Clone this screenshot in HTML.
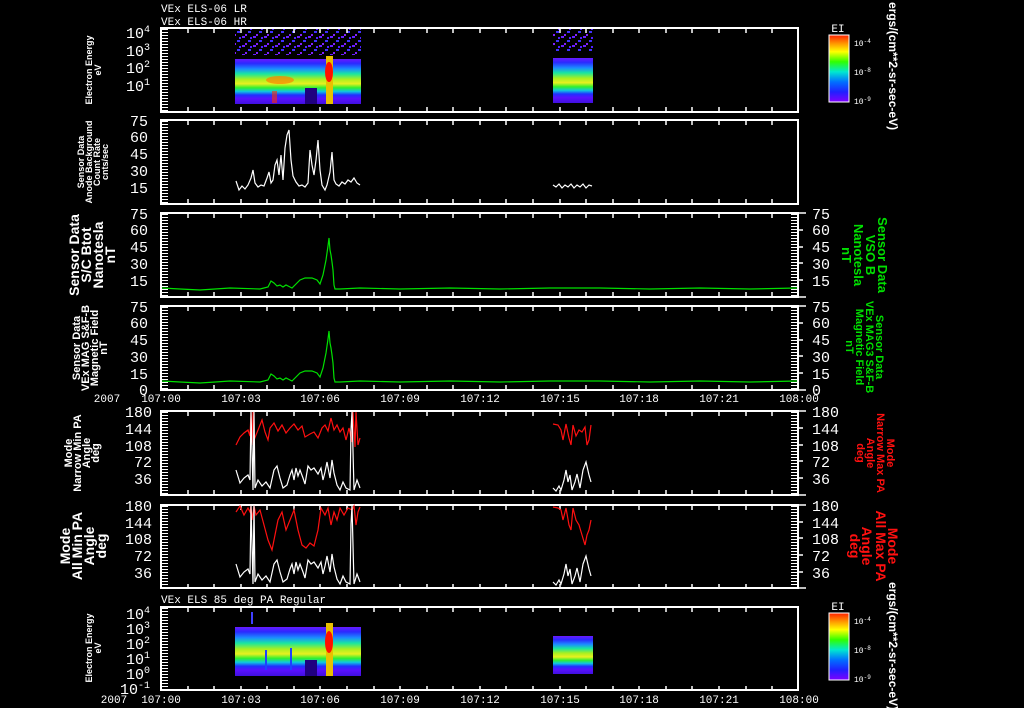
<!DOCTYPE html>
<html><head><meta charset="utf-8"><style>
html,body{margin:0;padding:0;background:#000;width:1024px;height:708px;overflow:hidden}
svg{display:block}
text{font-family:"Liberation Mono","DejaVu Sans Mono",monospace;fill:#fff}
.t{font-size:11px}
.yl{font-size:15px;font-family:"Liberation Sans",sans-serif}
text.lab,.lab text{font-family:"Liberation Sans",sans-serif;font-weight:bold}
</style></head><body>
<svg width="1024" height="708" viewBox="0 0 1024 708" xmlns="http://www.w3.org/2000/svg">
<defs>
<linearGradient id="sp1" x1="0" y1="0" x2="0" y2="1">
<stop offset="0" stop-color="#6a1aff"/><stop offset="0.1" stop-color="#2a2aff"/><stop offset="0.22" stop-color="#1c8cff"/><stop offset="0.33" stop-color="#19e6a0"/><stop offset="0.45" stop-color="#a8f020"/><stop offset="0.55" stop-color="#e8f020"/><stop offset="0.64" stop-color="#30f030"/><stop offset="0.72" stop-color="#10c8e0"/><stop offset="0.8" stop-color="#2030ff"/><stop offset="0.88" stop-color="#5a10ff"/><stop offset="1" stop-color="#4010e0"/>
</linearGradient>
<linearGradient id="cb" x1="0" y1="0" x2="0" y2="1">
<stop offset="0" stop-color="#ff2000"/><stop offset="0.12" stop-color="#ff9000"/><stop offset="0.25" stop-color="#ffff00"/><stop offset="0.4" stop-color="#30ff00"/><stop offset="0.55" stop-color="#00e8d0"/><stop offset="0.7" stop-color="#0070ff"/><stop offset="0.85" stop-color="#2020ff"/><stop offset="1" stop-color="#8000ff"/>
</linearGradient>
<pattern id="spk" width="11" height="9" patternUnits="userSpaceOnUse">
<rect x="0" y="0" width="3" height="2" fill="#6a20ff"/><rect x="6" y="4" width="3" height="2" fill="#4030ff"/><rect x="3" y="7" width="2" height="2" fill="#8020ff"/><rect x="8" y="1" width="2" height="2" fill="#5020ff"/>
</pattern>
</defs>

<text class="t" x="161" y="12">VEx ELS-06 LR</text>
<text class="t" x="161" y="25">VEx ELS-06 HR</text>
<text class="t" x="161" y="603">VEx ELS 85 deg PA Regular</text>

<!-- Panel 1 spectrogram -->
<rect x="235" y="29" width="126" height="26" fill="url(#spk)"/>
<rect x="235" y="59" width="126" height="45" fill="url(#sp1)"/>
<ellipse cx="280" cy="80" rx="14" ry="4" fill="#ff8000" opacity="0.7"/>
<rect x="272" y="91" width="5" height="12" fill="#ff3000" opacity="0.6"/>
<rect x="305" y="88" width="12" height="16" fill="#200080"/>
<rect x="326" y="56" width="7" height="48" fill="#e8c000"/>
<ellipse cx="329" cy="72" rx="4" ry="10" fill="#ff1000"/>
<rect x="553" y="29" width="40" height="22" fill="url(#spk)"/>
<rect x="553" y="58" width="40" height="45" fill="url(#sp1)"/>

<!-- Panel 7 spectrogram -->
<rect x="235" y="627" width="126" height="49" fill="url(#sp1)"/>
<rect x="305" y="660" width="12" height="16" fill="#200080"/>
<rect x="326" y="623" width="7" height="53" fill="#e8c000"/>
<ellipse cx="329" cy="642" rx="4" ry="11" fill="#ff1000"/>
<rect x="553" y="636" width="40" height="38" fill="url(#sp1)"/>
<rect x="251" y="612" width="2" height="12" fill="#4040ff"/>
<rect x="265" y="650" width="2" height="20" fill="#2040ff"/>
<rect x="290" y="648" width="2" height="22" fill="#2040ff"/>

<g fill="none" stroke="#fff" stroke-width="2">
<rect x="161" y="28" width="637" height="84"/>
<rect x="161" y="120" width="637" height="84"/>
<rect x="161" y="213" width="637" height="84"/>
<rect x="161" y="306" width="637" height="84"/>
<rect x="161" y="411" width="637" height="84"/>
<rect x="161" y="505" width="637" height="83"/>
<rect x="161" y="607" width="637" height="83"/>
</g>

<g stroke="#fff" stroke-width="6" stroke-dasharray="1 2">
<line x1="165" y1="29" x2="165" y2="111"/>
<line x1="165" y1="121" x2="165" y2="203"/>
<line x1="165" y1="214" x2="165" y2="296"/>
<line x1="165" y1="307" x2="165" y2="389"/>
<line x1="165" y1="412" x2="165" y2="494"/>
<line x1="165" y1="506" x2="165" y2="587"/>
<line x1="165" y1="608" x2="165" y2="689"/>
<line x1="794" y1="214" x2="794" y2="296"/>
<line x1="794" y1="307" x2="794" y2="389"/>
<line x1="794" y1="412" x2="794" y2="494"/>
<line x1="794" y1="506" x2="794" y2="587"/>
</g>
<g stroke="#fff" stroke-width="1.5">
<path d="M798 213h8M798 230h5M798 247h5M798 263h5M798 280h5M798 297h8"/>
<path d="M798 306h8M798 323h5M798 340h5M798 356h5M798 373h5M798 390h8"/>
<path d="M798 411h8M798 428h5M798 445h5M798 461h5M798 478h5M798 495h8"/>
<path d="M798 505h8M798 522h5M798 538h5M798 555h5M798 572h5M798 588h8"/>
</g>

<g stroke="#fff" stroke-width="1.5" id="xt">
<path d="M188 28v5M214 28v5M241 28v5M267 28v5M294 28v5M320 28v5M347 28v5M374 28v5M400 28v5M427 28v5M453 28v5M480 28v5M506 28v5M533 28v5M560 28v5M586 28v5M613 28v5M639 28v5M666 28v5M692 28v5M719 28v5M746 28v5M772 28v5"/>
<path d="M188 112v-5M214 112v-5M241 112v-5M267 112v-5M294 112v-5M320 112v-5M347 112v-5M374 112v-5M400 112v-5M427 112v-5M453 112v-5M480 112v-5M506 112v-5M533 112v-5M560 112v-5M586 112v-5M613 112v-5M639 112v-5M666 112v-5M692 112v-5M719 112v-5M746 112v-5M772 112v-5"/>
</g>
<use href="#xt" y="92"/>
<use href="#xt" y="185"/>
<use href="#xt" y="278"/>
<use href="#xt" y="383"/>
<use href="#xt" y="477"/>
<use href="#xt" y="579"/>

<g class="yl" text-anchor="end">
<text x="150" y="38">10<tspan dy="-6" font-size="10">4</tspan></text>
<text x="150" y="56">10<tspan dy="-6" font-size="10">3</tspan></text>
<text x="150" y="73">10<tspan dy="-6" font-size="10">2</tspan></text>
<text x="150" y="91">10<tspan dy="-6" font-size="10">1</tspan></text>
<text x="148" y="126">75</text><text x="148" y="142">60</text><text x="148" y="159">45</text><text x="148" y="176">30</text><text x="148" y="193">15</text>
<text x="148" y="219">75</text><text x="148" y="235">60</text><text x="148" y="252">45</text><text x="148" y="269">30</text><text x="148" y="286">15</text>
<text x="148" y="312">75</text><text x="148" y="328">60</text><text x="148" y="345">45</text><text x="148" y="362">30</text><text x="148" y="379">15</text><text x="148" y="395">0</text>
<text x="152" y="417">180</text><text x="152" y="434">144</text><text x="152" y="451">108</text><text x="152" y="467">72</text><text x="152" y="484">36</text>
<text x="152" y="511">180</text><text x="152" y="528">144</text><text x="152" y="544">108</text><text x="152" y="561">72</text><text x="152" y="578">36</text>
<text x="150" y="619">10<tspan dy="-6" font-size="10">4</tspan></text>
<text x="150" y="634">10<tspan dy="-6" font-size="10">3</tspan></text>
<text x="150" y="649">10<tspan dy="-6" font-size="10">2</tspan></text>
<text x="150" y="664">10<tspan dy="-6" font-size="10">1</tspan></text>
<text x="150" y="679">10<tspan dy="-6" font-size="10">0</tspan></text>
<text x="150" y="694">10<tspan dy="-6" font-size="10">-1</tspan></text>
</g>
<g class="yl">
<text x="812" y="219">75</text><text x="812" y="235">60</text><text x="812" y="252">45</text><text x="812" y="269">30</text><text x="812" y="286">15</text>
<text x="812" y="312">75</text><text x="812" y="328">60</text><text x="812" y="345">45</text><text x="812" y="362">30</text><text x="812" y="379">15</text><text x="812" y="395">0</text>
<text x="812" y="417">180</text><text x="812" y="434">144</text><text x="812" y="451">108</text><text x="812" y="467">72</text><text x="812" y="484">36</text>
<text x="812" y="511">180</text><text x="812" y="528">144</text><text x="812" y="544">108</text><text x="812" y="561">72</text><text x="812" y="578">36</text>
</g>

<g class="t" text-anchor="middle">
<text x="107" y="402">2007</text><text x="161" y="402">107:00</text><text x="241" y="402">107:03</text><text x="320" y="402">107:06</text><text x="400" y="402">107:09</text><text x="480" y="402">107:12</text><text x="560" y="402">107:15</text><text x="639" y="402">107:18</text><text x="719" y="402">107:21</text><text x="799" y="402">108:00</text>
<text x="114" y="703">2007</text><text x="161" y="703">107:00</text><text x="241" y="703">107:03</text><text x="320" y="703">107:06</text><text x="400" y="703">107:09</text><text x="480" y="703">107:12</text><text x="560" y="703">107:15</text><text x="639" y="703">107:18</text><text x="719" y="703">107:21</text><text x="799" y="703">108:00</text>
</g>

<g fill="none" stroke-width="1.2">
<polyline stroke="#fff" points="236,181 239,190 242,186 245,189 248,185 251,178 253,170 255,183 258,187 261,185 264,186 267,178 269,172 271,183 273,180 275,165 277,160 279,175 281,155 283,180 285,148 287,135 289,130 291,160 293,176 296,182 299,186 302,185 305,187 308,183 310,150 312,165 314,175 316,160 318,140 320,170 322,185 325,190 327,185 330,172 332,152 334,180 336,184 339,186 342,182 345,184 348,180 351,182 354,178 357,183 360,185"/>
<polyline stroke="#fff" points="553,185 556,187 559,184 562,188 565,185 568,187 571,184 574,188 577,185 580,187 583,184 586,188 589,185 592,186"/>
<polyline id="g1" stroke="#00e000" points="162,288 180,289 200,290 230,288 260,289 268,287 271,281 274,283 277,286 280,285 283,287 286,285 290,287 292,288 296,284 300,280 305,278 312,278 317,280 320,284 323,275 326,260 328,246 329,238 330,250 331,255 332,262 333,270 334,285 335,289 340,289 360,288 400,289 450,288 500,289 550,288 600,288 650,289 700,288 750,289 797,288"/>
<use href="#g1" y="93"/>
<polyline stroke="#ff1010" points="236,445 240,437 244,433 248,430 250,436 251,412 252,445 253,412 254,440 258,430 262,420 265,432 268,440 270,428 274,423 278,431 282,425 286,433 290,428 294,424 298,430 302,426 305,437 310,434 314,432 318,438 322,428 325,425 328,431 331,418 334,430 337,425 340,432 343,428 346,440 349,428 352,442 353,412 355,447 356,412 358,445 360,438"/>
<polyline stroke="#ff1010" points="553,424 558,425 561,430 563,440 566,424 569,438 571,445 573,425 576,436 579,430 582,432 585,427 587,445 589,440 591,425"/>
<polyline id="w1" stroke="#fff" points="236,470 240,483 244,478 248,475 250,480 251,412 253,490 254,412 255,488 258,480 262,486 266,482 270,488 274,470 277,466 280,478 283,488 287,485 290,475 292,470 294,480 296,468 298,476 300,470 303,478 305,484 308,466 311,470 314,468 318,474 321,468 323,480 325,472 327,462 330,478 332,460 334,473 337,485 340,490 343,482 346,488 350,490 351,430 352,412 354,490 357,480 360,488"/>
<polyline id="w2" stroke="#fff" points="553,488 556,491 559,486 561,490 564,480 566,470 568,482 570,475 572,490 575,482 577,474 580,488 583,470 586,462 589,475 591,482"/>
<polyline stroke="#ff1010" points="236,512 240,506 244,515 248,508 250,512 251,506 252,520 254,506 256,515 260,510 264,525 268,540 272,550 275,535 278,520 282,512 286,530 290,520 294,510 298,530 302,545 306,548 310,543 314,546 318,530 321,508 325,515 328,508 331,525 334,512 337,520 340,508 344,515 348,508 352,510 354,506 356,525 358,512 360,507"/>
<polyline stroke="#ff1010" points="553,507 558,508 561,510 563,520 566,508 569,525 571,530 573,508 576,520 579,525 582,535 585,545 587,535 589,530 591,520"/>
<use href="#w1" y="94"/>
<use href="#w2" y="94"/>
</g>

<g>
<rect x="829" y="35" width="20" height="67" fill="url(#cb)" stroke="#fff" stroke-width="1"/>
<text x="838" y="32" class="t" text-anchor="middle" font-size="10">EI</text>
<text x="854" y="46" font-size="8">10<tspan dy="-3" font-size="6">-4</tspan></text>
<text x="854" y="75" font-size="8">10<tspan dy="-3" font-size="6">-8</tspan></text>
<text x="854" y="104" font-size="8">10<tspan dy="-3" font-size="6">-9</tspan></text>
<rect x="829" y="613" width="20" height="67" fill="url(#cb)" stroke="#fff" stroke-width="1"/>
<text x="838" y="610" class="t" text-anchor="middle" font-size="10">EI</text>
<text x="854" y="624" font-size="8">10<tspan dy="-3" font-size="6">-4</tspan></text>
<text x="854" y="653" font-size="8">10<tspan dy="-3" font-size="6">-8</tspan></text>
<text x="854" y="682" font-size="8">10<tspan dy="-3" font-size="6">-9</tspan></text>
</g>
<text class="lab" transform="translate(889,2) rotate(90)" font-size="12">ergs/(cm**2-sr-sec-eV)</text>
<text class="lab" transform="translate(889,582) rotate(90)" font-size="12">ergs/(cm**2-sr-sec-eV)</text>

<g class="lab" text-anchor="middle" font-size="9">
<text transform="translate(92,70) rotate(-90)">Electron Energy</text>
<text transform="translate(101,70) rotate(-90)">eV</text>
<text transform="translate(84,162) rotate(-90)">Sensor Data</text>
<text transform="translate(92,162) rotate(-90)">Anode Background</text>
<text transform="translate(100,162) rotate(-90)">Count Rate</text>
<text transform="translate(108,162) rotate(-90)">cnts/sec</text>
<text transform="translate(92,648) rotate(-90)">Electron Energy</text>
<text transform="translate(101,648) rotate(-90)">eV</text>
</g>
<g class="lab" text-anchor="middle" font-size="14">
<text transform="translate(79,255) rotate(-90)">Sensor Data</text>
<text transform="translate(91,255) rotate(-90)">S/C Btot</text>
<text transform="translate(103,255) rotate(-90)">Nanotesla</text>
<text transform="translate(115,255) rotate(-90)">nT</text>
<text transform="translate(70,546) rotate(-90)">Mode</text>
<text transform="translate(82,546) rotate(-90)">All Min PA</text>
<text transform="translate(94,546) rotate(-90)">Angle</text>
<text transform="translate(106,546) rotate(-90)">deg</text>
</g>
<g class="lab" text-anchor="middle" font-size="11">
<text transform="translate(80,348) rotate(-90)">Sensor Data</text>
<text transform="translate(89,348) rotate(-90)">VEx MAG S&amp;F-B</text>
<text transform="translate(98,348) rotate(-90)">Magnetic Field</text>
<text transform="translate(107,348) rotate(-90)">nT</text>
<text transform="translate(72,453) rotate(-90)">Mode</text>
<text transform="translate(81,453) rotate(-90)">Narrow Min PA</text>
<text transform="translate(90,453) rotate(-90)">Angle</text>
<text transform="translate(99,453) rotate(-90)">deg</text>
</g>

<g class="lab" text-anchor="middle" font-size="13">
<text style="fill:#00e000" transform="translate(878,255) rotate(90)">Sensor Data</text>
<text style="fill:#00e000" transform="translate(866,255) rotate(90)">VSO B</text>
<text style="fill:#00e000" transform="translate(854,255) rotate(90)">Nanotesla</text>
<text style="fill:#00e000" transform="translate(842,255) rotate(90)">nT</text>
</g>
<g class="lab" text-anchor="middle" font-size="11">
<text style="fill:#00e000" transform="translate(876,347) rotate(90)">Sensor Data</text>
<text style="fill:#00e000" transform="translate(866,347) rotate(90)">VEx MAG3 S&amp;F-B</text>
<text style="fill:#00e000" transform="translate(856,347) rotate(90)">Magnetic Field</text>
<text style="fill:#00e000" transform="translate(846,347) rotate(90)">nT</text>
<text style="fill:#ff1010" transform="translate(887,453) rotate(90)">Mode</text>
<text style="fill:#ff1010" transform="translate(877,453) rotate(90)">Narrow Max PA</text>
<text style="fill:#ff1010" transform="translate(867,453) rotate(90)">Angle</text>
<text style="fill:#ff1010" transform="translate(857,453) rotate(90)">deg</text>
</g>
<g class="lab" text-anchor="middle" font-size="14">
<text style="fill:#ff1010" transform="translate(888,546) rotate(90)">Mode</text>
<text style="fill:#ff1010" transform="translate(876,546) rotate(90)">All Max PA</text>
<text style="fill:#ff1010" transform="translate(862,546) rotate(90)">Angle</text>
<text style="fill:#ff1010" transform="translate(850,546) rotate(90)">deg</text>
</g>
</svg>
</body></html>
